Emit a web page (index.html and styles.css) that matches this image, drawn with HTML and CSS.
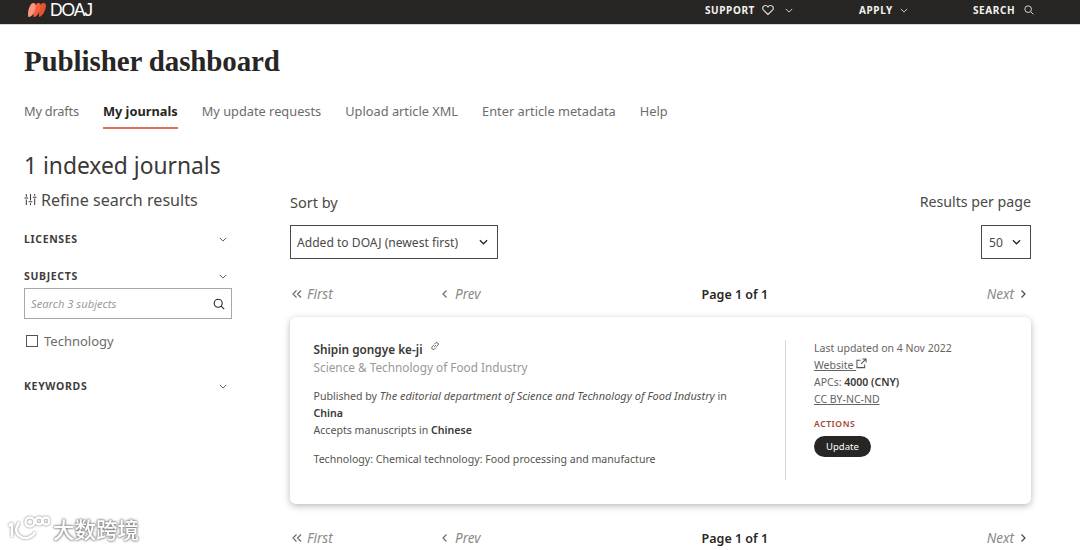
FILE: index.html
```html
<!DOCTYPE html>
<html lang="en">
<head>
<meta charset="utf-8">
<title>Publisher dashboard - DOAJ</title>
<link rel="stylesheet" href="styles.css">
</head>
<body>
<header class="topbar">
  <div class="brand">
    <svg class="brand-mark" viewBox="0 0 18 14" width="18" height="14"><path fill="#e2562f" d="M11 14C13 14 17 10 18 3 18 1.500 17.500 0 16 0 14 0 11.500 1 11 5Z"/><path fill="#f4603c" d="M5.500 14C9 14 12 9 12.500 3.500 12.500 1 12 0 10.500 0 7.500 0 5.500 4 5 8Z"/><path fill="#fb9580" d="M.5 14C4 14 7 9.500 7.500 3.500 7.500 1 7 0 5.500 0 2.500 0 .5 5 0 10 0 12 0 14 .5 14Z"/></svg>
    <span class="brand-name">DOAJ</span>
  </div>
  <nav class="topnav">
    <a class="topnav-item topnav-support">SUPPORT
      <svg class="ico" viewBox="0 0 12 12" width="12" height="12"><path d="M6 10.500 1.300 5.800C-.2 3.800 1.500 1.500 3.500 1.500 4.700 1.500 5.500 2.200 6 3 6.500 2.200 7.300 1.500 8.500 1.500 10.500 1.500 12.200 3.800 10.700 5.800Z"/></svg>
      <svg class="ico chev-top" viewBox="0 0 10 6" width="8" height="5"><path d="M1 1l4 4 4-4"/></svg>
    </a>
    <a class="topnav-item topnav-apply">APPLY
      <svg class="ico chev-top" viewBox="0 0 10 6" width="8" height="5"><path d="M1 1l4 4 4-4"/></svg>
    </a>
    <a class="topnav-item topnav-search">SEARCH
      <svg class="ico" viewBox="0 0 12 12" width="10" height="10"><circle cx="5" cy="5" r="4"/><path d="M8 8l3.200 3.200"/></svg>
    </a>
  </nav>
</header>

<main class="page">
  <h1 class="page-title">Publisher dashboard</h1>
  <nav class="tabs">
    <a class="tab">My drafts</a>
    <a class="tab tab-active">My journals</a>
    <a class="tab">My update requests</a>
    <a class="tab">Upload article XML</a>
    <a class="tab">Enter article metadata</a>
    <a class="tab">Help</a>
  </nav>
  <h2 class="count">1 indexed journals</h2>

  <div class="layout">
    <aside class="sidebar">
      <h3 class="refine">
        <svg class="refine-ico" viewBox="0 0 14 14" width="13" height="13"><path d="M2.500 1v3M2.500 7v6M7 1v7M7 11v2M11.500 1v2M11.500 6v7M.5 5.500h4M5 9.500h4M9.500 4.500h4"/></svg>
        Refine search results
      </h3>
      <div class="facet facet-licenses">
        <span class="facet-name">LICENSES</span>
        <svg class="chev" viewBox="0 0 10 6" width="8" height="5"><path d="M1 1l4 4 4-4"/></svg>
      </div>
      <div class="facet facet-subjects">
        <span class="facet-name">SUBJECTS</span>
        <svg class="chev" viewBox="0 0 10 6" width="8" height="5"><path d="M1 1l4 4 4-4"/></svg>
      </div>
      <div class="subject-search">
        <span class="placeholder">Search 3 subjects</span>
        <svg class="search-ico" viewBox="0 0 12 12" width="12" height="12"><circle cx="5.200" cy="5.200" r="4"/><path d="M8.200 8.200l3 3"/></svg>
      </div>
      <label class="check"><span class="box"></span>Technology</label>
      <div class="facet facet-keywords">
        <span class="facet-name">KEYWORDS</span>
        <svg class="chev" viewBox="0 0 10 6" width="8" height="5"><path d="M1 1l4 4 4-4"/></svg>
      </div>
    </aside>

    <section class="results">
      <div class="controls">
        <div class="control">
          <div class="control-label">Sort by</div>
          <div class="select select-sort">Added to DOAJ (newest first)
            <svg class="chev chev-dark" viewBox="0 0 10 6" width="9" height="6"><path d="M1 1l4 4 4-4"/></svg>
          </div>
        </div>
        <div class="control control-right">
          <div class="control-label">Results per page</div>
          <div class="select select-size">50
            <svg class="chev chev-dark" viewBox="0 0 10 6" width="9" height="6"><path d="M1 1l4 4 4-4"/></svg>
          </div>
        </div>
      </div>

      <div class="pager">
        <span class="pager-left">
          <span class="pager-link pager-first"><svg class="pg" viewBox="0 0 10 8" width="10" height="8"><path d="M4.500 .5 1 4l3.500 3.500M9 .5 5.500 4 9 7.500"/></svg><em>First</em></span>
          <span class="pager-link pager-prev"><svg class="pg" viewBox="0 0 6 8" width="6" height="8"><path d="M4.500 .5 1 4l3.500 3.500"/></svg><em>Prev</em></span>
        </span>
        <strong class="pager-now">Page 1 of 1</strong>
        <span class="pager-link pager-next"><em>Next</em><svg class="pg pg-dark" viewBox="0 0 6 8" width="6" height="8"><path d="M1.500 .5 5 4 1.500 7.500"/></svg></span>
      </div>

      <article class="card">
        <div class="card-main">
          <div class="journal-title">Shipin gongye ke-ji
            <svg class="link-ico" viewBox="0 0 12 12" width="10" height="10"><path d="M5 7l2-2M4.500 5 2.500 7a2 2 0 0 0 2.800 2.800L7 8M5 4l1.700-1.700a2 2 0 0 1 2.800 2.800L7.500 7"/></svg>
          </div>
          <div class="journal-alt">Science &amp; Technology of Food Industry</div>
          <p class="meta">Published by <em>The editorial department of Science and Technology of Food Industry</em> in <b>China</b><br>Accepts manuscripts in <b>Chinese</b></p>
          <p class="meta meta-subject">Technology: Chemical technology: Food processing and manufacture</p>
        </div>
        <div class="card-side">
          <div>Last updated on 4 Nov 2022</div>
          <div><u>Website </u><svg class="ext-ico" viewBox="0 0 12 12" width="11" height="11"><path d="M9.500 7v3.500h-8.500v-8h4M7 1h4v4M11 1 5.500 6.500"/></svg></div>
          <div>APCs: <b>4000 (CNY)</b></div>
          <div><u>CC BY-NC-ND</u></div>
          <div class="actions-label">ACTIONS</div>
          <a class="update">Update</a>
        </div>
      </article>

      <div class="pager pager-bottom">
        <span class="pager-left">
          <span class="pager-link pager-first"><svg class="pg" viewBox="0 0 10 8" width="10" height="8"><path d="M4.500 .5 1 4l3.500 3.500M9 .5 5.500 4 9 7.500"/></svg><em>First</em></span>
          <span class="pager-link pager-prev"><svg class="pg" viewBox="0 0 6 8" width="6" height="8"><path d="M4.500 .5 1 4l3.500 3.500"/></svg><em>Prev</em></span>
        </span>
        <strong class="pager-now">Page 1 of 1</strong>
        <span class="pager-link pager-next"><em>Next</em><svg class="pg pg-dark" viewBox="0 0 6 8" width="6" height="8"><path d="M1.500 .5 5 4 1.500 7.500"/></svg></span>
      </div>
    </section>
  </div>
</main>

<div class="watermark">
  <svg viewBox="0 0 42 28" width="42" height="28"><path d="M4 8v14M4 8 1 11M11 7 8 14c0 7 8 11 14 8 3-1 4-3 5-5"/><circle cx="22" cy="7" r="4.500"/><circle cx="31" cy="6" r="3.500"/><circle cx="38" cy="6" r="3.500"/></svg>
  <span class="watermark-text">大数跨境</span>
</div>
</body>
</html>
```

FILE: styles.css
```css
* { box-sizing: border-box; }
html, body { margin: 0; padding: 0; height: 550px; overflow: hidden; background: #fff; }
body { font-family: "Noto Sans", "Open Sans", sans-serif; color: #282624; }
svg { fill: none; stroke: currentColor; stroke-width: 1.100; display: inline-block; }

.topbar { height: 25px; background: #282624; border-bottom: 1px solid #d8d8d8; display: flex; justify-content: space-between; padding: 0 32px 0 28px; color: #f4f2ee; }
.brand { display: flex; align-items: center; gap: 4px; margin-top: -4px; }
.brand-mark { stroke: none; }
.brand-mark path { stroke: none; }
.brand-name { font-family: "Liberation Sans", sans-serif; font-size: 17.500px; letter-spacing: -1.200px; color: #fff; }
.topnav { display: flex; align-items: center; font-size: 10px; font-weight: 700; letter-spacing: .6px; margin-top: -4px; }
.topnav-item { display: flex; align-items: center; }
.topnav-support { width: 154px; }
.topnav-support .ico:first-of-type { margin-left: 7px; }
.topnav-support .chev-top { margin-left: 11px; }
.topnav-apply { width: 114px; }
.topnav-apply .chev-top { margin-left: 7px; }
.topnav-search { width: 75px; }
.topnav-search .ico { margin-left: 9px; }
.ico { color: #e4e2de; }

.page { padding: 0 49px 0 24px; }
.page-title { font-family: "Liberation Serif", serif; font-weight: 700; font-size: 29px; line-height: 36px; margin: 18px 0 0; color: #282624; letter-spacing: -.12px; }
.tabs { display: flex; gap: 24px; margin-top: 17px; font-size: 12.800px; color: #6e6c69; }
.tab { display: block; height: 33px; padding-top: 5px; line-height: 20px; }
.tab:first-child { letter-spacing: -.2px; }
.tab-active { font-weight: 700; color: #282624; border-bottom: 2px solid #e0705b; }
.count { font-size: 22.800px; font-weight: 400; line-height: 32px; margin: 21px 0 0; color: #3a3836; }

.layout { display: grid; grid-template-columns: 208px 1fr; column-gap: 58px; }

.refine { font-size: 16.100px; font-weight: 400; line-height: 22px; margin: 7px 0 0; color: #4a4846; display: flex; align-items: center; gap: 4px; white-space: nowrap; }
.refine-ico { margin-top: -2px; color: #3a3836; }
.facet { display: flex; justify-content: space-between; align-items: center; height: 16px; padding-right: 5px; }
.facet-name { font-size: 10.500px; font-weight: 700; letter-spacing: .65px; color: #3f3d3b; }
.chev { color: #4a4846; }
.chev-dark { color: #282624; stroke-width: 1.400; }
.facet-licenses { margin-top: 20px; }
.facet-subjects { margin-top: 21px; }
.subject-search { height: 31px; margin-top: 4px; border: 1px solid #a8a8a8; display: flex; align-items: center; justify-content: space-between; padding: 0 6px; }
.placeholder { font-size: 11.200px; font-style: italic; color: #9b9b9b; }
.search-ico { color: #282624; }
.check { display: flex; align-items: center; gap: 6px; margin-top: 12px; padding-left: 2px; height: 20px; font-size: 13px; color: #6e6c69; }
.box { width: 12px; height: 12px; border: 1px solid #555; }
.facet-keywords { margin-top: 27px; }

.controls { display: flex; justify-content: space-between; margin-top: 9px; }
.control-label { font-size: 14.500px; line-height: 22px; color: #4a4846; }
.control-right { display: flex; flex-direction: column; align-items: flex-end; }
.control-right .control-label { font-size: 14.200px; }
.select { height: 34px; margin-top: 12px; border: 1px solid #4a4846; display: flex; align-items: center; justify-content: space-between; padding: 0 9px 0 6px; font-size: 12.100px; color: #4a4846; }
.select-sort { width: 208px; }
.select-size { width: 50px; padding-left: 7px; }

.pager { display: flex; justify-content: space-between; align-items: center; height: 20px; margin-top: 25px; font-size: 13.500px; color: #8b8986; }
.pager-left { display: flex; }
.pager-link { display: flex; align-items: center; gap: 5px; }
.pager-link em { font-style: italic; }
.pager-first { width: 152px; padding-left: 2px; }
.pager-prev { width: 60px; gap: 7px; }
.pager-now { color: #282624; font-weight: 600; font-size: 12.500px; margin-left: -19px; }
.pager-next { margin-right: 5px; gap: 6px; }
.pg { color: #6e6c69; stroke-width: 1.200; }
.pg-dark { color: #4a4846; }

.card { display: flex; height: 187px; margin-top: 13px; border-radius: 6px; background: #fff; box-shadow: 0 2px 7px rgba(0,0,0,.28); padding: 23px 0 24px 23.500px; }
.card-main { width: 471.500px; padding-right: 40px; font-size: 10.600px; color: #55534f; }
.journal-title { font-size: 11.800px; font-weight: 600; color: #3a3836; line-height: 18px; }
.link-ico { margin-left: 4px; vertical-align: 3px; color: #55534f; }
.journal-alt { font-size: 11.800px; line-height: 18px; color: #9a9895; }
.meta { margin: 11px 0 0; line-height: 17px; }
.meta em { font-size: 11px; }
.meta b { font-weight: 600; color: #3a3836; }
.meta-subject { margin-top: 12px; }
.card-side { border-left: 1px solid #d6d6d6; padding-left: 28px; height: 140px; font-size: 10.500px; line-height: 17px; color: #66645f; }
.card-side b { font-weight: 600; color: #3a3836; }
.ext-ico { vertical-align: 0; color: #55534f; }
.actions-label { font-size: 8.500px; font-weight: 600; letter-spacing: .6px; color: #a0452f; margin-top: 10px; line-height: 12px; }
.update { display: inline-block; margin-top: 6px; background: #282624; color: #fff; border-radius: 11px; height: 21px; line-height: 21px; padding: 0 12px; font-size: 9.500px; }
.pager-bottom { margin-top: 24px; }

.watermark { position: absolute; left: 8px; top: 513px; display: flex; align-items: center; gap: 3px; color: #fff; filter: drop-shadow(0 0 1px #777); }
.watermark svg { stroke-width: 2.500; }
.watermark-text { font-family: "Noto Sans CJK SC", sans-serif; font-size: 21.500px; font-weight: 500; color: #fff; text-shadow: 0 0 2px #888; }
```
